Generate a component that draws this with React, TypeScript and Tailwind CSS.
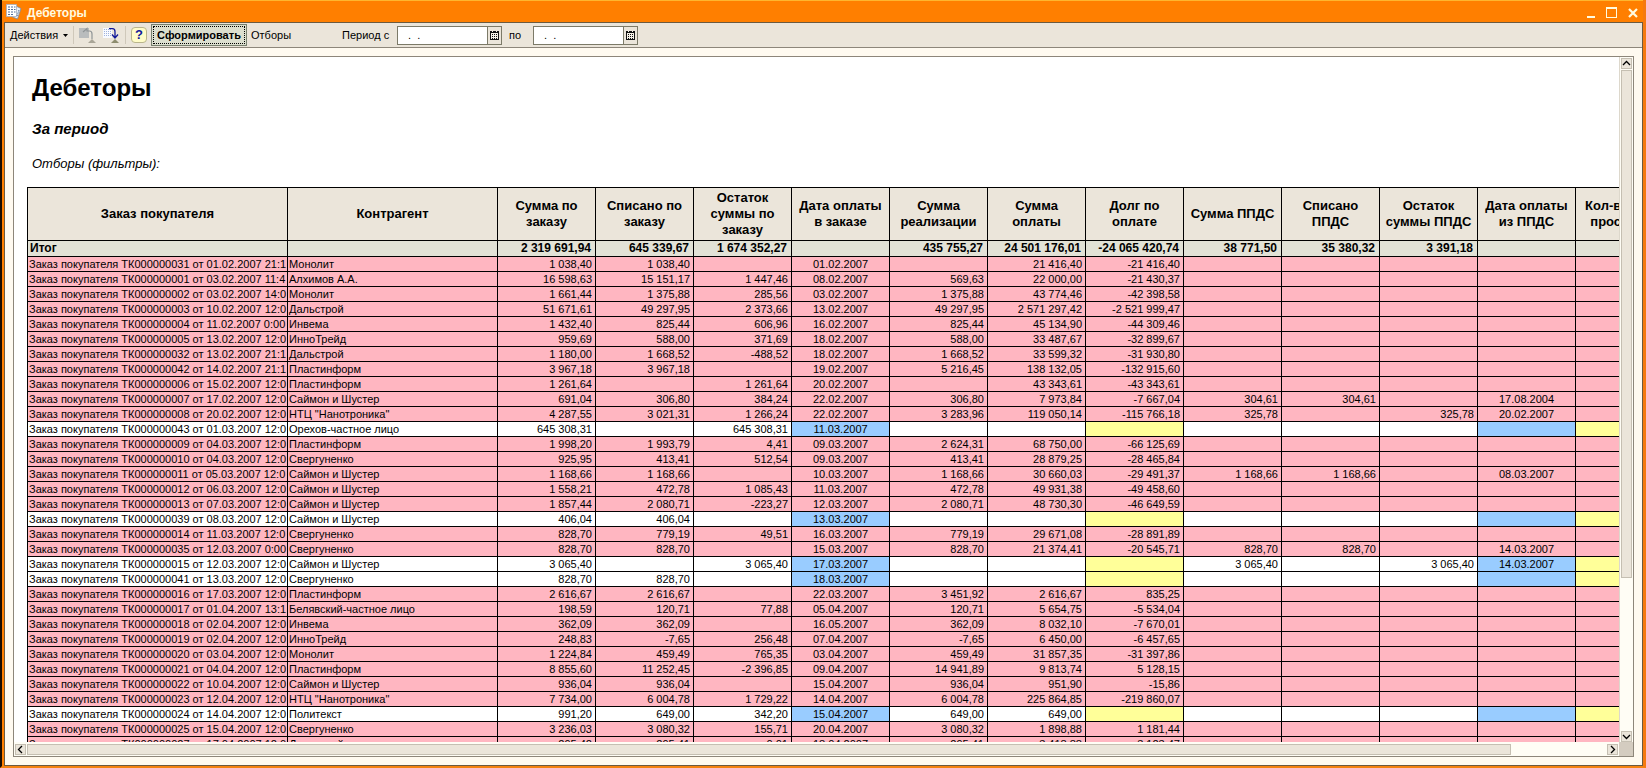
type Row = {
  order: string;
  client: string;
  cells: string[];
  open?: boolean;
};

const PREFIX = 'Заказ покупателя ТК0000000';

// cells: order sum | written off | rest | pay date | sales | paid | debt | PPDS sum | PPDS written off | PPDS rest | PPDS date
const data: [string, string, string, boolean?][] = [
  ['31 от 01.02.2007 21:1', 'Монолит', '1 038,40|1 038,40||01.02.2007||21 416,40|-21 416,40||||'],
  ['01 от 03.02.2007 11:4', 'Алхимов А.А.', '16 598,63|15 151,17|1 447,46|08.02.2007|569,63|22 000,00|-21 430,37||||'],
  ['02 от 03.02.2007 14:0', 'Монолит', '1 661,44|1 375,88|285,56|03.02.2007|1 375,88|43 774,46|-42 398,58||||'],
  ['03 от 10.02.2007 12:0', 'Дальстрой', '51 671,61|49 297,95|2 373,66|13.02.2007|49 297,95|2 571 297,42|-2 521 999,47||||'],
  ['04 от 11.02.2007 0:00', 'Инвема', '1 432,40|825,44|606,96|16.02.2007|825,44|45 134,90|-44 309,46||||'],
  ['05 от 13.02.2007 12:0', 'ИнноТрейд', '959,69|588,00|371,69|18.02.2007|588,00|33 487,67|-32 899,67||||'],
  ['32 от 13.02.2007 21:1', 'Дальстрой', '1 180,00|1 668,52|-488,52|18.02.2007|1 668,52|33 599,32|-31 930,80||||'],
  ['42 от 14.02.2007 21:1', 'Пластинформ', '3 967,18|3 967,18||19.02.2007|5 216,45|138 132,05|-132 915,60||||'],
  ['06 от 15.02.2007 12:0', 'Пластинформ', '1 261,64||1 261,64|20.02.2007||43 343,61|-43 343,61||||'],
  ['07 от 17.02.2007 12:0', 'Саймон и Шустер', '691,04|306,80|384,24|22.02.2007|306,80|7 973,84|-7 667,04|304,61|304,61||17.08.2004'],
  ['08 от 20.02.2007 12:0', 'НТЦ "Нанотроника"', '4 287,55|3 021,31|1 266,24|22.02.2007|3 283,96|119 050,14|-115 766,18|325,78||325,78|20.02.2007'],
  ['43 от 01.03.2007 12:0', 'Орехов-частное лицо', '645 308,31||645 308,31|11.03.2007|||||||', true],
  ['09 от 04.03.2007 12:0', 'Пластинформ', '1 998,20|1 993,79|4,41|09.03.2007|2 624,31|68 750,00|-66 125,69||||'],
  ['10 от 04.03.2007 12:0', 'Свергуненко', '925,95|413,41|512,54|09.03.2007|413,41|28 879,25|-28 465,84||||'],
  ['11 от 05.03.2007 12:0', 'Саймон и Шустер', '1 168,66|1 168,66||10.03.2007|1 168,66|30 660,03|-29 491,37|1 168,66|1 168,66||08.03.2007'],
  ['12 от 06.03.2007 12:0', 'Саймон и Шустер', '1 558,21|472,78|1 085,43|11.03.2007|472,78|49 931,38|-49 458,60||||'],
  ['13 от 07.03.2007 12:0', 'Саймон и Шустер', '1 857,44|2 080,71|-223,27|12.03.2007|2 080,71|48 730,30|-46 649,59||||'],
  ['39 от 08.03.2007 12:0', 'Саймон и Шустер', '406,04|406,04||13.03.2007|||||||', true],
  ['14 от 11.03.2007 12:0', 'Свергуненко', '828,70|779,19|49,51|16.03.2007|779,19|29 671,08|-28 891,89||||'],
  ['35 от 12.03.2007 0:00', 'Свергуненко', '828,70|828,70||15.03.2007|828,70|21 374,41|-20 545,71|828,70|828,70||14.03.2007'],
  ['15 от 12.03.2007 12:0', 'Саймон и Шустер', '3 065,40||3 065,40|17.03.2007||||3 065,40||3 065,40|14.03.2007', true],
  ['41 от 13.03.2007 12:0', 'Свергуненко', '828,70|828,70||18.03.2007|||||||', true],
  ['16 от 17.03.2007 12:0', 'Пластинформ', '2 616,67|2 616,67||22.03.2007|3 451,92|2 616,67|835,25||||'],
  ['17 от 01.04.2007 13:1', 'Белявский-частное лицо', '198,59|120,71|77,88|05.04.2007|120,71|5 654,75|-5 534,04||||'],
  ['18 от 02.04.2007 12:0', 'Инвема', '362,09|362,09||16.05.2007|362,09|8 032,10|-7 670,01||||'],
  ['19 от 02.04.2007 12:0', 'ИнноТрейд', '248,83|-7,65|256,48|07.04.2007|-7,65|6 450,00|-6 457,65||||'],
  ['20 от 03.04.2007 12:0', 'Монолит', '1 224,84|459,49|765,35|03.04.2007|459,49|31 857,35|-31 397,86||||'],
  ['21 от 04.04.2007 12:0', 'Пластинформ', '8 855,60|11 252,45|-2 396,85|09.04.2007|14 941,89|9 813,74|5 128,15||||'],
  ['22 от 10.04.2007 12:0', 'Саймон и Шустер', '936,04|936,04||15.04.2007|936,04|951,90|-15,86||||'],
  ['23 от 12.04.2007 12:0', 'НТЦ "Нанотроника"', '7 734,00|6 004,78|1 729,22|14.04.2007|6 004,78|225 864,85|-219 860,07||||'],
  ['24 от 14.04.2007 12:0', 'Политекст', '991,20|649,00|342,20|15.04.2007|649,00|649,00|||||', true],
  ['25 от 15.04.2007 12:0', 'Свергуненко', '3 236,03|3 080,32|155,71|20.04.2007|3 080,32|1 898,88|1 181,44||||'],
  ['27 от 17.04.2007 12:0', 'Дальстрой', '295,42|295,41|0,01|18.04.2007|295,41|3 418,88|3 123,47||||'],
];

const rows: Row[] = data.map(([order, client, cells, open]) => ({
  order: PREFIX + order,
  client,
  cells: [...cells.split('|').slice(0, 11), ''],
  open,
}));

const headers = [
  ['Заказ покупателя'],
  ['Контрагент'],
  ['Сумма по', 'заказу'],
  ['Списано по', 'заказу'],
  ['Остаток', 'суммы по', 'заказу'],
  ['Дата оплаты', 'в заказе'],
  ['Сумма', 'реализации'],
  ['Сумма', 'оплаты'],
  ['Долг по', 'оплате'],
  ['Сумма ППДС'],
  ['Списано', 'ППДС'],
  ['Остаток', 'суммы ППДС'],
  ['Дата оплаты', 'из ППДС'],
  ['Кол-во дней', 'просрочки'],
];

const totals = [
  '2 319 691,94', '645 339,67', '1 674 352,27', '', '435 755,27', '24 501 176,01',
  '-24 065 420,74', '38 771,50', '35 380,32', '3 391,18', '', '',
];

const DATE_COLS = [3, 10];
const DEBT_COLS = [6, 11];

function cellColor(open: boolean | undefined, i: number) {
  if (!open) return '';
  if (DATE_COLS.includes(i)) return 'bg-[#99ccff]';
  if (DEBT_COLS.includes(i)) return 'bg-[#ffff99]';
  return '';
}

function DateField({ id }: { id: string }) {
  return (
    <div className="flex h-[19px] w-[105px] border border-[#7c7a68] bg-white">
      <input id={id} type="text" defaultValue="  .  ." className="min-w-0 flex-1 bg-white px-1 outline-none" />
      <button type="button" aria-label="Календарь" className="flex w-[14px] items-center justify-center border-l border-[#7c7a68] bg-[#ebe5da]">
        <svg width="9" height="9" viewBox="0 0 9 9" shapeRendering="crispEdges">
          <path d="M0 0h9v9H0z" fill="#111" />
          <path d="M2 0h1v1H2zM6 0h1v1H6zM1 2h7v6H1z" fill="#f4f0e6" />
          <path d="M2 3h1v1H2zM4 3h1v1H4zM6 3h1v1H6zM2 5h1v1H2zM4 5h1v1H4zM6 5h1v1H6zM2 7h1v1H2zM4 7h1v1H4zM6 7h1v1H6z" fill="#111" />
        </svg>
      </button>
    </div>
  );
}

function ScrollButton({ label, path }: { label: string; path: string }) {
  return (
    <button type="button" aria-label={label} className="flex size-[11px] shrink-0 items-center justify-center border border-[#c5bfb2] bg-[#ebe5da]">
      <svg width="9" height="9" viewBox="0 0 9 9" fill="none" stroke="#000" strokeWidth="1.3" className="shrink-0">
        <path d={path} />
      </svg>
    </button>
  );
}

function TitleBar() {
  return (
    <header className="flex h-[22px] shrink-0 items-center border-t border-[#ffb52e] bg-[#ff7f00] pr-[5px] pl-[4px] text-[#fffbe0]">
      <svg width="16" height="16" viewBox="0 0 16 16">
        <path d="M9 1.500l6 3-3.500 10.500-5-2z" fill="#e9eef5" stroke="#7d8a9c" strokeWidth="0.8" />
        <path d="M0.500 0.500h10v12h-10z" fill="#fff" stroke="#a4afc0" strokeWidth="0.8" />
        <path d="M2 3h2M5 3h2M8 3h1.500M2 5.500h2M5 5.500h2M8 5.500h1.500M2 8h2M5 8h2M8 8h1.500M2 10.500h2M5 10.500h2" stroke="#52719c" strokeWidth="1.200" />
        <path d="M13 6l-2 6" stroke="#52719c" strokeDasharray="1.500 1" />
      </svg>
      <h1 className="ml-[5px] flex-1 pt-[2px] text-xs leading-4 font-bold">Дебеторы</h1>
      <div className="flex items-center gap-[10px] pt-[2px]">
        <button type="button" aria-label="Свернуть">
          <svg width="9" height="12" viewBox="0 0 9 12" className="block">
            <path d="M0 9h8v2H0z" fill="#fffbe0" />
          </svg>
        </button>
        <button type="button" aria-label="Развернуть">
          <svg width="12" height="12" viewBox="0 0 12 12" className="block" shapeRendering="crispEdges">
            <path d="M0 0h11v11H0zM1 2v8h9V2z" fill="#fffbe0" fillRule="evenodd" />
          </svg>
        </button>
        <button type="button" aria-label="Закрыть">
          <svg width="10" height="12" viewBox="0 0 10 12" className="block">
            <path d="M1 2l8 8M9 2l-8 8" stroke="#fffbe0" strokeWidth="2.200" />
          </svg>
        </button>
      </div>
    </header>
  );
}

function Toolbar() {
  return (
    <div className="flex h-[25px] shrink-0 items-center border-b border-[#8d867a] bg-[#ebe5da] pl-[5px] text-[11px]">
      <button type="button" className="flex w-[63px] items-center justify-between pr-[5px]">
        Действия
        <svg width="5" height="3" viewBox="0 0 5 3" className="shrink-0">
          <path d="M0 0h5L2.500 3z" />
        </svg>
      </button>
      <span className="h-[18px] w-px bg-[#cfc8ba]" />
      <button type="button" aria-label="Назад" className="ml-[5px]">
        <svg width="17" height="17" viewBox="0 0 17 17" className="block">
          <path d="M0 1h10v10H0z" fill="#b9bcbd" />
          <path d="M4 5l4-3.500V4h2.500q2.500 0 2.500 3v5" fill="none" stroke="#8f9496" strokeWidth="1.200" />
          <path d="M13 12l4 4h-8z" fill="#a9a597" />
        </svg>
      </button>
      <button type="button" aria-label="Вперёд" className="ml-[7px]">
        <svg width="17" height="17" viewBox="0 0 17 17" className="block">
          <path d="M0 1h9v10H0z" fill="#f8faff" />
          <path d="M1 2.500h7M1 4.500h7M1 6.500h7M1 8.500h7" stroke="#9fb2dc" strokeDasharray="1 1" />
          <path d="M6 1.700h3.500q2.500 0 2.500 3V10M9 7.500l3 3.500 3-3.500" fill="none" stroke="#10189a" strokeWidth="1.300" />
          <path d="M12 12l4 4H8z" fill="#8d8c6e" />
        </svg>
      </button>
      <span className="ml-[5px] h-[18px] w-px bg-[#cfc8ba]" />
      <button type="button" className="ml-[5px] size-4 rounded border border-[#b9b58c] bg-[#fffcc8] text-[13px] leading-[14px] font-bold text-[#10189a]">
        ?
      </button>
      <button type="button" className="ml-1 h-[22px] w-[96px] border border-[#77806f] bg-[#dcdfcf] p-px font-bold">
        <span className="flex h-full items-center justify-center border border-dotted border-black">Сформировать</span>
      </button>
      <button type="button" className="ml-1 w-[91px] text-left">
        Отборы
      </button>
      <label htmlFor="from" className="w-[55px]">
        Период с
      </label>
      <DateField id="from" />
      <label htmlFor="to" className="w-[31px] pl-[7px]">
        по
      </label>
      <DateField id="to" />
    </div>
  );
}

function ReportTable() {
  return (
    <table className="mt-[13px] ml-[13px] w-[1647px] table-fixed border-separate border-spacing-0 border-t border-l border-black text-[11px] leading-[14px] whitespace-nowrap">
      <colgroup>
        <col className="w-[260px]" />
        <col className="w-[210px]" />
        {totals.map((_, i) => (
          <col key={i} className="w-[98px]" />
        ))}
      </colgroup>
      <thead>
        <tr className="h-[53px] bg-[#ebe5da] text-[13px] leading-4">
          {headers.map((lines, i) => (
            <th key={i} className="border-r border-b border-black">
              {lines.map((line) => (
                <div key={line}>{line}</div>
              ))}
            </th>
          ))}
        </tr>
        <tr className="h-4 bg-[#e2e2d6] text-xs leading-[15px]">
          <th className="border-r border-b border-black pl-[2px] text-left">Итог</th>
          <th className="border-r border-b border-black" />
          {totals.map((t, i) => (
            <th key={i} className="border-r border-b border-black pr-1 text-right">
              {t}
            </th>
          ))}
        </tr>
      </thead>
      <tbody>
        {rows.map((row) => (
          <tr key={row.order} className={`h-[15px] ${row.open ? 'bg-white' : 'bg-[#ffb6c1]'}`}>
            <td className="overflow-hidden border-r border-b border-black pl-px">{row.order}</td>
            <td className="overflow-hidden border-r border-b border-black pl-px">{row.client}</td>
            {row.cells.map((c, i) => (
              <td
                key={i}
                className={`border-r border-b border-black ${DATE_COLS.includes(i) ? 'text-center' : 'pr-[3px] text-right'} ${cellColor(row.open, i)}`}
              >
                {c}
              </td>
            ))}
          </tr>
        ))}
      </tbody>
    </table>
  );
}

export default function App() {
  return (
    <div className="h-screen border-r-[3px] border-b-2 border-l-2 border-r-[#f57a10] border-b-[#f58210] border-l-[#1a0c00] bg-[#ff7f00] font-['Liberation_Sans',Arial,sans-serif] text-black">
      <div className="flex h-full flex-col">
        <TitleBar />
        <div className="ml-[2px] flex min-h-0 flex-1 flex-col border border-[#6b5a40] bg-[#fffaf0]">
          <Toolbar />
          <main className="mx-2 mt-2 mb-[8px] flex min-h-0 flex-1 flex-col border border-[#8d867a] bg-[#fffdf5]">
            <div className="flex min-h-0 flex-1">
              <div className="min-w-0 flex-1 overflow-hidden bg-white pt-[15px]">
                <h2 className="pl-[18px] text-2xl leading-8 font-bold">Дебеторы</h2>
                <p className="mt-[15px] pl-[18px] text-[15px] leading-5 font-bold italic">За период</p>
                <p className="mt-[15px] pl-[18px] text-[13px] leading-5 italic">Отборы (фильтры):</p>
                <ReportTable />
              </div>
              <div className="flex w-[14px] shrink-0 flex-col items-center gap-px border-l border-[#ddd8cc] pt-px">
                <ScrollButton label="Вверх" path="M1 6l3.500-3.500L8 6" />
                <div className="flex w-[11px] flex-1 flex-col">
                  <div className="h-[77%] border border-[#c5bfb2] bg-[#ebe5da]" />
                </div>
                <ScrollButton label="Вниз" path="M1 3l3.500 3.500L8 3" />
              </div>
            </div>
            <div className="flex h-[14px] shrink-0 items-center gap-px pl-px">
              <ScrollButton label="Влево" path="M6 1L2.500 4.500 6 8" />
              <div className="flex h-[11px] flex-1">
                <div className="w-[94%] border border-[#c5bfb2] bg-[#ebe5da]" />
              </div>
              <ScrollButton label="Вправо" path="M3 1l3.500 3.500L3 8" />
              <span className="h-full w-[14px] bg-[#d4ccc0]" />
            </div>
          </main>
        </div>
      </div>
    </div>
  );
}
